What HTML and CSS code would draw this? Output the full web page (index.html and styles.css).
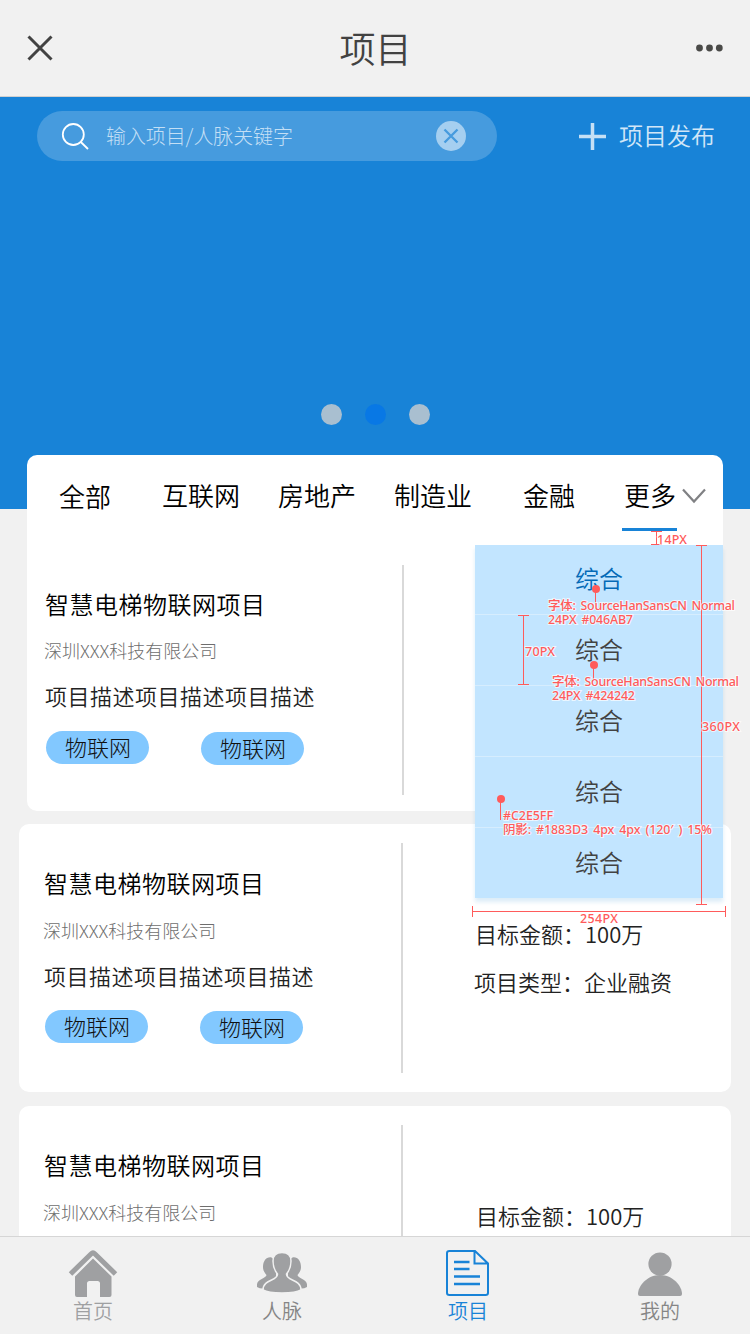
FILE: index.html
```html
<!DOCTYPE html>
<html lang="zh-CN">
<head>
<meta charset="utf-8">
<title>项目</title>
<link rel="stylesheet" href="styles.css">
</head>
<body>
<div class="phone">
  <header class="navbar">
    <svg class="nav-close" width="28" height="28" viewBox="0 0 28 28"><path d="M2.500 2.500 25.500 25.500M25.500 2.500 2.500 25.500"/></svg>
    <h1>项目</h1>
    <svg class="nav-more" width="28" height="10" viewBox="0 0 28 10"><circle cx="3.500" cy="5" r="3.400"/><circle cx="13.500" cy="5" r="3.400"/><circle cx="23.300" cy="5" r="3.400"/></svg>
  </header>

  <main class="content">
    <section class="banner">
      <div class="banner-top">
        <div class="search">
          <svg class="search-icon" width="28" height="28" viewBox="0 0 28 28"><circle cx="12.300" cy="12.500" r="10.500"/><path d="M19.800 20 27 27"/></svg>
          <span class="search-hint">输入项目/人脉关键字</span>
          <svg class="search-clear" width="30" height="30" viewBox="0 0 30 30"><circle cx="15" cy="15" r="15"/><path d="M8.500 8.500 21.500 21.500M21.500 8.500 8.500 21.500"/></svg>
        </div>
        <div class="publish">
          <svg width="27" height="27" viewBox="0 0 27 27"><path d="M0 13.500H27M13.500 0V27"/></svg>
          <span>项目发布</span>
        </div>
      </div>
      <div class="dots"><i></i><i class="on"></i><i></i></div>
    </section>

    <section class="card card-main">
      <nav class="tabs">
        <span class="tab all">全部</span>
        <span class="tab">互联网</span>
        <span class="tab">房地产</span>
        <span class="tab">制造业</span>
        <span class="tab">金融</span>
        <span class="tab active">更多</span>
        <svg class="chevron" width="24" height="16" viewBox="0 0 24 16"><path d="M1 1.500 12 13.500 23 1.500"/></svg>
      </nav>
      <div class="project first">
        <div class="info">
          <h2>智慧电梯物联网项目</h2>
          <p class="company">深圳XXX科技有限公司</p>
          <p class="desc">项目描述项目描述项目描述</p>
          <div class="tags"><span>物联网</span><span>物联网</span></div>
        </div>
      </div>
      <div class="dropdown">
        <span class="option selected">综合</span>
        <span class="option">综合</span>
        <span class="option">综合</span>
        <span class="option">综合</span>
        <span class="option">综合</span>
      </div>
    </section>

    <section class="card project">
      <div class="info">
        <h2>智慧电梯物联网项目</h2>
        <p class="company">深圳XXX科技有限公司</p>
        <p class="desc">项目描述项目描述项目描述</p>
        <div class="tags"><span>物联网</span><span>物联网</span></div>
      </div>
      <div class="facts">
        <p>目标金额：100万</p>
        <p>项目类型：企业融资</p>
      </div>
    </section>

    <section class="card project">
      <div class="info">
        <h2>智慧电梯物联网项目</h2>
        <p class="company">深圳XXX科技有限公司</p>
      </div>
      <div class="facts last">
        <p>目标金额：100万</p>
      </div>
    </section>
  </main>

  <footer class="tabbar">
    <div class="item home">
      <svg width="52" height="50" viewBox="0 0 52 50">
        <path d="M3.500 25 24 5Q26 3 28 5L48.500 25" fill="none" stroke="#9fa0a2" stroke-width="5" stroke-linejoin="round"/>
        <path d="M26 9.500 44.500 27.500V46Q44.500 48 42.500 48H33V34.500Q33 32 30.500 32H22.500Q20 32 20 34.500V48H10Q8 48 8 46V27.500Z"/>
      </svg>
      <span>首页</span>
    </div>
    <div class="item people">
      <svg width="52" height="50" viewBox="0 0 52 50">
        <path d="M15.500 8.500C10.500 7.500 7 12 7 18C7 22 9 24 10.500 26C10.500 29 1 30.500 1 35.500V38Q4 40 9 39.500L20 34V12ZM36.500 8.500C41.500 7.500 45 12 45 18C45 22 43 24 41.500 26C41.500 29 51 30.500 51 35.500V38Q48 40 43 39.500L32 34V12Z"/>
        <path d="M26 3.500C20.500 3.500 17 6.500 17 12C17 19 19 22 21.500 25C22 32 7 30 7 41Q12 44 26 44T45 41C45 30 30 32 30.500 25C33 22 35 19 35 12C35 6.500 31.500 3.500 26 3.500Z" stroke="#f1f1f1" stroke-width="1.500"/>
      </svg>
      <span>人脉</span>
    </div>
    <div class="item active project-tab">
      <svg width="44" height="50" viewBox="0 0 44 50" fill="none" stroke="#1883d7" stroke-width="2">
        <path d="M29 2H3.500Q1 2 1 4V44Q1 46 3.500 46H39.500Q42 46 42 44V14.500ZM28.500 2V14.500H42"/>
        <path d="M8 13H23.500M8 20H23.500M8 27.500H34M8 35H34" stroke-width="2.400"/>
      </svg>
      <span>项目</span>
    </div>
    <div class="item mine">
      <svg width="44" height="50" viewBox="0 0 44 50">
        <circle cx="22" cy="15" r="11.600"/>
        <path d="M22 26C9 26 0 37 0 45Q0 47 2 47H42Q44 47 44 45C44 37 35 26 22 26Z"/>
      </svg>
      <span>我的</span>
    </div>
  </footer>

  <svg class="notes" width="750" height="1334" viewBox="0 0 750 1334">
    <g class="rules">
      <path d="M656.500 531V545M651 531.500H662M651 544.500H662"/>
      <path d="M523.500 615V685M518 615.500H529M518 684.500H529"/>
      <path d="M701.500 545V905M696 545.500H707M696 904.500H707"/>
      <path d="M473 911.500H726M472.500 906V917M725.500 906V917"/>
      <path d="M595.500 589V603M593.500 665V679M500.500 799V820"/>
    </g>
    <g class="pins"><circle cx="596" cy="589" r="4"/><circle cx="594" cy="665" r="4"/><circle cx="501" cy="799" r="4"/></g>
    <g class="labels">
      <text x="657" y="544" textLength="30">14PX</text>
      <text x="525" y="656" textLength="30">70PX</text>
      <text x="702" y="731" textLength="38">360PX</text>
      <text x="580" y="923" textLength="38">254PX</text>
      <text x="548" y="610" textLength="187">字体: SourceHanSansCN Normal</text>
      <text x="548" y="624" textLength="85">24PX #046AB7</text>
      <text x="552" y="686" textLength="187">字体: SourceHanSansCN Normal</text>
      <text x="552" y="700" textLength="83">24PX #424242</text>
      <text x="503" y="820" textLength="50">#C2E5FF</text>
      <text x="503" y="834" textLength="209">阴影: #1883D3 4px 4px (120′ ) 15%</text>
    </g>
  </svg>
</div>
</body>
</html>
```

FILE: styles.css
```css
* { box-sizing: border-box; margin: 0; padding: 0; }

body {
  background: #f1f1f1;
  font-family: "Noto Sans CJK SC", sans-serif;
  font-weight: 350;
}

svg { display: block; flex: none; }

.phone {
  position: relative;
  display: flex;
  flex-direction: column;
  width: 750px;
  height: 1334px;
  overflow: hidden;
}

/* Title bar */
.navbar {
  flex: none;
  display: flex;
  align-items: center;
  justify-content: space-between;
  height: 97px;
  padding: 0 26px;
  border-bottom: 1px solid #d0d0d0;
}
.navbar h1 { font-size: 36px; line-height: 48px; font-weight: 350; color: #424242; padding: 0 0 3px 1px; }
.nav-close { fill: none; stroke: #424242; stroke-width: 3; }
.nav-more { fill: #4a4a48; }

.content { flex: 1; min-height: 0; overflow: hidden; }

/* Banner */
.banner {
  display: flex;
  flex-direction: column;
  justify-content: space-between;
  height: 412px;
  padding: 14px 35px 84px 37px;
  background: #1883d7;
}
.banner-top { display: flex; justify-content: space-between; align-items: center; }
.search {
  display: flex;
  align-items: center;
  width: 460px;
  height: 50px;
  padding: 0 31px 0 24px;
  border-radius: 25px;
  background: #469bde;
}
.search-icon { fill: none; stroke: #fff; stroke-width: 1.8; }
.search-hint { flex: 1; margin-left: 17px; padding-bottom: 1px; font-size: 20px; line-height: 30px; letter-spacing: -0.1px; font-weight: 300; color: #c3dff5; }
.search-clear { fill: #a5cff0; }
.search-clear path { stroke: #469bde; stroke-width: 2.3; }
.publish { display: flex; align-items: center; gap: 13px; font-size: 24px; line-height: 34px; color: #d1e6f7; }
.publish svg { margin-top: 1px; stroke: #c5e0f5; stroke-width: 3.5; }
.publish span { padding-bottom: 2px; }
.dots { display: flex; justify-content: center; gap: 23px; }
.dots i { width: 21px; height: 21px; border-radius: 50%; background: #a9bfd0; }
.dots i:first-child { margin-left: -2px; }
.dots .on { background: #0878e5; }

/* Cards */
.card { background: #fff; border-radius: 10px; margin: 0 19px 14px; }
.card-main { position: relative; height: 356px; margin: -54px 27px 13px; }

.tabs { display: flex; height: 76px; padding-left: 32px; font-size: 26px; line-height: 76px; color: #000; }
.tab { padding-top: 2px; margin-right: 38px; }
.tab.all { padding-top: 3px; margin-right: 51px; }
.tab:nth-child(4) { margin-right: 51px; }
.tab:nth-child(5) { margin-right: 47px; }
.tab.active { height: 76px; padding: 2px 0 0 2px; width: 55px; margin-right: 5px; line-height: 76px; border-bottom: 3px solid #1883d7; }
.chevron { margin-top: 33px; fill: none; stroke: #808184; stroke-width: 2.2; }

.project { display: flex; height: 268px; padding-left: 25px; }
.project.first { height: 280px; padding: 14px 0 0 18px; }
.info {
  width: 359px;
  height: 230px;
  margin-top: 19px;
  padding-top: 22px;
  border-right: 2px solid #d9d9d9;
}
.first .info { margin-top: 20px; padding-top: 21px; }
.info h2 { font-size: 24px; line-height: 36px; letter-spacing: 0.5px; font-weight: 350; color: #000; }
.company { margin: 15px 0 0 -1px; font-size: 18px; line-height: 28px; font-weight: 300; color: #6e6e6e; }
.first .company { margin-top: 14px; }
.desc { margin-top: 15px; font-size: 22px; line-height: 32px; letter-spacing: 0.5px; color: #222; }
.tags { display: flex; gap: 52px; margin: 19px 0 0 1px; }
.first .tags { margin-top: 20px; }
.tags span { width: 103px; height: 33px; border-radius: 17px; background: #82c8ff; font-size: 22px; font-weight: 300; line-height: 31px; text-align: center; color: #111; padding-left: 1px; }
.tags span + span { margin-top: 1px; }
.facts { display: grid; align-content: start; gap: 16px; padding: 93px 0 0 71px; font-size: 22px; line-height: 32px; color: #222; }
.facts p:first-child { padding-left: 1px; }
.facts.last { padding-left: 72px; }

/* Category menu */
.dropdown {
  position: absolute;
  top: 90px;
  right: 0;
  width: 248px;
  background: #c2e5ff;
  box-shadow: 0 4px 4px rgba(24, 131, 211, 0.15);
}
.option { display: block; height: 71px; border-bottom: 1px solid #d6edfe; font-size: 24px; line-height: 68px; text-align: center; color: #424242; }
.option.selected { height: 70px; line-height: 66px; color: #046ab7; }
.option:last-child { height: 70px; border-bottom: 0; }

/* Bottom navigation */
.tabbar {
  flex: none;
  display: flex;
  height: 98px;
  padding: 12px 0 0 67px;
  border-top: 1px solid #d6d6d6;
  background: #f1f1f1;
}
.item { display: flex; flex-direction: column; align-items: center; fill: #9fa0a2; font-size: 20px; line-height: 24px; color: #858585; }
.home { color: #9fa0a2; margin-right: 137px; }
.people { padding-top: 1px; margin-right: 138px; }
.people svg { margin-top: -1px; }
.item.active { color: #1883d7; margin-right: 148px; }

/* Measurement notes */
.notes { position: absolute; left: 0; top: 0; }
.rules { stroke: #ff5b5b; stroke-width: 1; }
.pins { fill: #ff5b5b; }
.labels {
  font: 500 12.5px "Noto Sans", "Noto Sans CJK SC", sans-serif;
  word-spacing: 2px;
  fill: #ff5b5b;
  stroke: #fff;
  stroke-opacity: 0.7;
  stroke-width: 2px;
  paint-order: stroke;
}
```
